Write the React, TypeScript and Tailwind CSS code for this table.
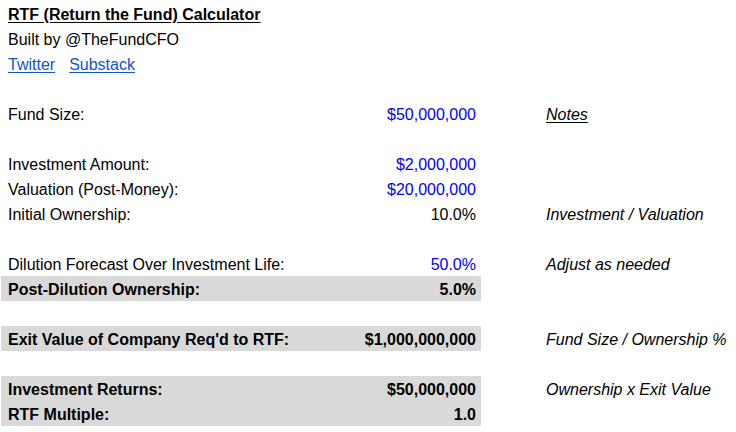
type Row = {
  label?: string
  value?: string
  note?: string
  bold?: boolean
  shaded?: boolean
  input?: boolean
}

const rows: Row[] = [
  {},
  { label: 'Fund Size:', value: '$50,000,000', input: true },
  {},
  { label: 'Investment Amount:', value: '$2,000,000', input: true },
  { label: 'Valuation (Post-Money):', value: '$20,000,000', input: true },
  { label: 'Initial Ownership:', value: '10.0%', note: 'Investment / Valuation' },
  {},
  { label: 'Dilution Forecast Over Investment Life:', value: '50.0%', input: true, note: 'Adjust as needed' },
  { label: 'Post-Dilution Ownership:', value: '5.0%', bold: true, shaded: true },
  {},
  { label: "Exit Value of Company Req'd to RTF:", value: '$1,000,000,000', bold: true, shaded: true, note: 'Fund Size / Ownership %' },
  {},
  { label: 'Investment Returns:', value: '$50,000,000', bold: true, shaded: true, note: 'Ownership x Exit Value' },
  { label: 'RTF Multiple:', value: '1.0', bold: true, shaded: true },
]

export default function App() {
  return (
    <div
      className="w-[736px] h-[432px] bg-white pt-[1px] text-[16px] text-black overflow-hidden"
      style={{ fontFamily: '"Liberation Sans", Arial, sans-serif' }}
    >
      <div className="h-[25px] flex items-center pt-[2px] pl-[8px]">
        <span className="font-bold underline underline-offset-2">RTF (Return the Fund) Calculator</span>
      </div>
      <div className="h-[25px] flex items-center pt-[2px] pl-[8px]">Built by @TheFundCFO</div>
      <div className="h-[25px] flex items-center pt-[2px] pl-[8px] gap-[14px] text-[#1155cc]">
        <a href="#" className="underline underline-offset-2">Twitter</a>
        <a href="#" className="underline underline-offset-2">Substack</a>
      </div>
      {rows.map((r, i) => (
        <div key={i} className="h-[25px] flex">
          <div
            className={
              'ml-[1px] w-[480px] flex items-center justify-between pt-[2px] pl-[7px] pr-[5px] ' +
              (r.shaded ? 'bg-[#d9d9d9] ' : '') +
              (r.bold ? 'font-bold' : '')
            }
          >
            <span>{r.label}</span>
            <span className={r.input ? 'text-[#0000ff]' : ''}>{r.value}</span>
          </div>
          <div className="flex items-center pt-[2px] pl-[65px] italic">
            {i === 1 ? <span className="underline underline-offset-2">Notes</span> : r.note}
          </div>
        </div>
      ))}
    </div>
  )
}
